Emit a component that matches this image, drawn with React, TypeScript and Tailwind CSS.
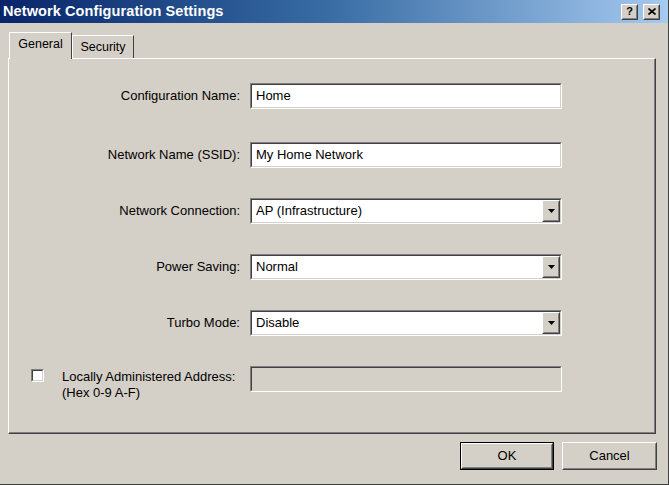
import React from "react";

const FIELDS: { label: string; value: string; kind: "text" | "select" }[] = [
  { label: "Configuration Name:", value: "Home", kind: "text" },
  { label: "Network Name (SSID):", value: "My Home Network", kind: "text" },
  { label: "Network Connection:", value: "AP (Infrastructure)", kind: "select" },
  { label: "Power Saving:", value: "Normal", kind: "select" },
  { label: "Turbo Mode:", value: "Disable", kind: "select" },
];

function Sunken({ children, disabled }: { children?: React.ReactNode; disabled?: boolean }) {
  return (
    <div className="h-[26px] w-[312px] border border-t-[#808080] border-l-[#808080] border-b-white border-r-white">
      <div
        className={`flex h-full w-full items-center border border-t-[#404040] border-l-[#404040] border-b-[#d4d0c8] border-r-[#d4d0c8] ${
          disabled ? "bg-[#d4d0c8]" : "bg-white"
        }`}
      >
        {children}
      </div>
    </div>
  );
}

function Raised({ className, children }: { className: string; children?: React.ReactNode }) {
  return (
    <div className={`border border-t-white border-l-white border-b-[#404040] border-r-[#404040] bg-[#d4d0c8] ${className}`}>
      <div className="flex h-full w-full items-center justify-center border border-t-[#d4d0c8] border-l-[#d4d0c8] border-b-[#808080] border-r-[#808080]">
        {children}
      </div>
    </div>
  );
}

function FieldRow({ label, value, kind }: (typeof FIELDS)[number]) {
  return (
    <div className="flex items-center">
      <div className="w-[232px] pr-[1px] text-right text-[13px] text-black">{label}</div>
      <div className="ml-[9px]">
        <Sunken>
          <span className="flex-1 pl-[4px] text-[13px] text-black">{value}</span>
          {kind === "select" && (
            <Raised className="h-full w-[18px]">
              <svg width="7" height="4" viewBox="0 0 7 4">
                <path d="M0 0h7L3.5 4z" fill="#000" />
              </svg>
            </Raised>
          )}
        </Sunken>
      </div>
    </div>
  );
}

export default function App() {
  return (
    <div
      className="flex h-[485px] w-[669px] flex-col overflow-hidden border-r border-b border-r-[#404040] border-b-[#404040] bg-[#d4d0c8] text-black"
      style={{ fontFamily: '"Liberation Sans", Arial, sans-serif' }}
    >
      {/* title bar */}
      <div className="flex h-[23px] shrink-0 items-center justify-between bg-gradient-to-r from-[#0a246a] via-[#3a6ea5] to-[#a6caf0] pl-[3px] pr-[8px]">
        <span className="text-[14.5px] font-bold tracking-[0.1px] text-white">Network Configuration Settings</span>
        <div className="flex gap-[5px]">
          <Raised className="h-[16px] w-[17px]">
            <span className="text-[11px] font-bold leading-none">?</span>
          </Raised>
          <Raised className="h-[16px] w-[17px]">
            <svg width="8" height="7" viewBox="0 0 8 7">
              <path d="M0.5 0.5l7 6M7.5 0.5l-7 6" stroke="#000" strokeWidth="1.6" />
            </svg>
          </Raised>
        </div>
      </div>

      <div className="flex flex-1 flex-col pl-[8px] pr-[11px] pt-[9px]">
        {/* tabs */}
        <div className="relative z-10 flex h-[26px] items-end">
          <div className="ml-[1px] flex h-[27px] w-[63px] items-center justify-center self-start border-l border-t border-r border-l-white border-t-white border-r-[#404040] bg-[#d4d0c8] pb-[3px] text-[12.5px]">
            General
          </div>
          <div className="flex h-[23px] w-[62px] items-center justify-center border-l border-t border-r border-l-white border-t-white border-r-[#404040] text-[12.5px]">
            Security
          </div>
        </div>

        {/* panel */}
        <div className="h-[376px] w-[648px] border border-t-white border-l-white border-b-[#404040] border-r-[#404040]">
          <div className="flex h-full w-full flex-col gap-[30px] border-b border-r border-b-[#808080] border-r-[#808080] pt-[24px]">
            {FIELDS.map((f, i) => (
              <div key={f.label} className={i === 0 ? "mb-[3px]" : ""}>
                <FieldRow {...f} />
              </div>
            ))}
            <div className="flex items-start">
              <div className="flex w-[232px] items-start">
                <div className="ml-[22px] mt-[3px] h-[13px] w-[13px] border border-t-[#808080] border-l-[#808080] border-b-white border-r-white">
                  <div className="h-full w-full border border-t-[#404040] border-l-[#404040] border-b-[#d4d0c8] border-r-[#d4d0c8] bg-white" />
                </div>
                <div className="ml-[18px] mt-[3px] text-[13px] leading-[16px]">
                  Locally Administered Address:
                  <br />
                  (Hex 0-9 A-F)
                </div>
              </div>
              <div className="ml-[9px]">
                <Sunken disabled />
              </div>
            </div>
          </div>
        </div>

        {/* buttons */}
        <div className="mt-[8px] flex justify-end gap-[8px]">
          <div className="h-[28px] w-[94px] border border-black">
            <Raised className="h-full w-full">
              <span className="text-[13px]">OK</span>
            </Raised>
          </div>
          <Raised className="h-[28px] w-[95px]">
            <span className="text-[13px]">Cancel</span>
          </Raised>
        </div>
      </div>
    </div>
  );
}
